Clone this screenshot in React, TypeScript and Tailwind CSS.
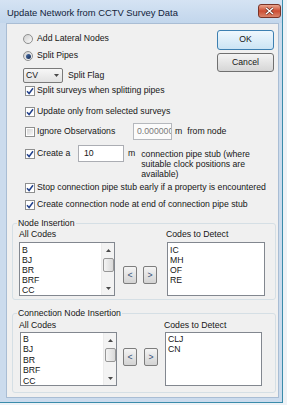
import React from "react";

const Check = () => (
  <svg width="8" height="8" viewBox="0 0 8 8">
    <path d="M1 4.3 L3.1 6.5 L7 1.3" fill="none" stroke="#22418c" strokeWidth="1.5" />
  </svg>
);

function CheckBox({ checked }: { checked?: boolean }) {
  return (
    <div className="w-[10px] h-[10px] shrink-0 border border-[#8e8f8f] bg-white flex items-center justify-center">
      {checked ? (
        <Check />
      ) : (
        <div className="w-[6px] h-[6px] bg-linear-to-br from-[#d6d6d6] to-[#f6f6f6]" />
      )}
    </div>
  );
}

function Radio({ checked }: { checked?: boolean }) {
  return (
    <div className="w-[10px] h-[10px] shrink-0 rounded-full border border-[#8e8f8f] bg-linear-to-br from-[#cfcfcf] to-[#fbfbfb] flex items-center justify-center">
      {checked && <div className="w-[5px] h-[5px] rounded-full bg-linear-to-br from-[#4a6fa8] to-[#142a52]" />}
    </div>
  );
}

function Tri({ down }: { down?: boolean }) {
  return (
    <svg width="5" height="3" viewBox="0 0 5 3">
      <path d={down ? "M0 0 L5 0 L2.5 3 Z" : "M0 3 L5 3 L2.5 0 Z"} fill="#4a4a4a" />
    </svg>
  );
}

function ListBox({ items, scroll, cls, inner }: { items: string[]; scroll?: boolean; cls: string; inner: string }) {
  return (
    <div className={`${cls} h-[54px] shrink-0 border border-[#82878f] bg-white flex overflow-hidden`}>
      <div className={`flex-1 pl-[2px] overflow-hidden ${inner}`}>
        {items.map((it) => (
          <div key={it}>{it}</div>
        ))}
      </div>
      {scroll && (
        <div className="w-[13px] h-full bg-[#f3f3f3] border-l border-[#ececec] flex flex-col items-center">
          <div className="h-[14px] w-full flex items-center justify-center">
            <Tri />
          </div>
          <div className="w-[11px] h-[14px] mt-[1px] rounded-[2px] border border-[#979797] bg-linear-to-r from-[#f4f4f4] to-[#d9d9d9]" />
          <div className="flex-1" />
          <div className="h-[14px] w-full flex items-center justify-center">
            <Tri down />
          </div>
        </div>
      )}
    </div>
  );
}

function SmallBtn({ label }: { label: string }) {
  return (
    <div className="w-[14px] h-[18px] shrink-0 border border-[#7d7d7d] rounded-[2px] bg-linear-to-b from-[#f4f4f4] to-[#d3d3d3] flex items-center justify-center text-[#304f78] leading-none">
      {label}
    </div>
  );
}

export default function App() {
  const all = ["B", "BJ", "BR", "BRF", "CC"];
  return (
    <div className="w-[287px] h-[405px] bg-[#eef2f6] font-['Liberation_Sans',Arial,sans-serif] text-[8.7px] text-[#161616] overflow-hidden">
      <div className="w-[283px] h-[403px] border-r border-b border-[#3a8cab] bg-[#cbdbed] flex flex-col">
        {/* Title bar */}
        <div className="h-[23px] shrink-0 flex items-start bg-linear-to-b from-[#d5e3f3] to-[#c2d6ec]">
          <div className="ml-[7px] mt-[7px] text-[9.4px] leading-[12px] text-[#11223a]">
            Update Network from CCTV Survey Data
          </div>
          <div className="ml-auto mr-[1px] mt-[4px] w-[23px] h-[14px] rounded-[3px] border border-[#7a3327] bg-linear-to-b from-[#e8a58f] via-[#cc4c33] to-[#d9846b] flex items-center justify-center">
            <svg width="9" height="8" viewBox="0 0 9 8">
              <path d="M1 1 L8 7 M8 1 L1 7" stroke="#5a2318" strokeWidth="2.6" />
              <path d="M1 1 L8 7 M8 1 L1 7" stroke="#ffffff" strokeWidth="1.5" />
            </svg>
          </div>
        </div>

        {/* Client area */}
        <div className="ml-[6px] w-[273px] h-[375px] shrink-0 border border-[#a9bdd4] bg-[#f0f0f0] flex flex-col">
          {/* Top row with buttons */}
          <div className="flex h-[59px] shrink-0">
            <div className="flex-1 pl-[16px] flex flex-col">
              <div className="mt-[8px] h-[14px] flex items-center gap-[4px]">
                <Radio />
                <span>Add Lateral Nodes</span>
              </div>
              <div className="mt-[3px] h-[14px] flex items-center gap-[4px]">
                <Radio checked />
                <span>Split Pipes</span>
              </div>
              <div className="mt-[5px] h-[15px] flex items-center gap-[5px]">
                <div className="w-[40px] h-[15px] border border-[#7a7a7a] rounded-[2px] bg-linear-to-b from-[#f7f7f7] to-[#e2e2e2] flex items-center pl-[2px] pr-[3px]">
                  <span className="flex-1">CV</span>
                  <Tri down />
                </div>
                <span>Split Flag</span>
              </div>
            </div>
            <div className="w-[57px] mr-[4px] mt-[6px] flex flex-col">
              <div className="h-[20px] border border-[#3c7fb1] rounded-[3px] bg-linear-to-b from-[#eef7fd] to-[#cbe4f4] flex items-center justify-center">
                OK
              </div>
              <div className="mt-[3px] h-[19px] border border-[#707070] rounded-[3px] bg-linear-to-b from-[#f4f4f4] to-[#d6d6d6] flex items-center justify-center">
                Cancel
              </div>
            </div>
          </div>

          {/* Option rows */}
          <div className="pl-[18px] flex flex-col">
            <div className="mt-[2px] h-[12px] flex items-center gap-[2px]">
              <CheckBox checked />
              <span>Split surveys when splitting pipes</span>
            </div>
            <div className="mt-[9px] h-[12px] flex items-center gap-[2px]">
              <CheckBox checked />
              <span>Update only from selected surveys</span>
            </div>
            <div className="mt-[5px] h-[17px] flex items-center">
              <CheckBox />
              <span className="ml-[2px] w-[96px]">Ignore Observations</span>
              <div className="w-[39px] h-[17px] border border-[#b5b8bd] bg-[#fbfbfb] flex items-center pl-[3px] overflow-hidden whitespace-nowrap text-[#7a7a7a]">
                0.000000
              </div>
              <span className="ml-[3px]">m</span>
              <span className="ml-[5px]">from node</span>
            </div>
            <div className="mt-[5px] h-[34px] flex items-start">
              <div className="h-[17px] flex items-center">
                <CheckBox checked />
                <span className="ml-[2px] w-[41px]">Create a</span>
              </div>
              <div className="w-[46px] h-[17px] border border-[#abadb3] bg-white flex items-center pl-[5px]">10</div>
              <div className="ml-[4px] h-[17px] flex items-center">m</div>
              <div className="ml-[6px] mt-[4px] leading-[10px]">
                <div>connection pipe stub (where</div>
                <div>suitable clock positions are</div>
                <div>available)</div>
              </div>
            </div>
            <div className="mt-[3px] h-[12px] flex items-center gap-[2px]">
              <CheckBox checked />
              <span>Stop connection pipe stub early if a property is encountered</span>
            </div>
            <div className="mt-[5px] h-[12px] flex items-center gap-[2px]">
              <CheckBox checked />
              <span>Create connection node at end of connection pipe stub</span>
            </div>
          </div>

          {/* Node Insertion group */}
          <fieldset className="mt-[7px] ml-[5px] w-[264px] border border-[#d5dfe5] rounded-[3px] pb-[3px]">
            <legend className="ml-[4px] px-[1px] leading-[10px]">Node Insertion</legend>
            <div className="mt-[1px] h-[10px] pl-[6px] flex items-center leading-[10px]">
              <span className="w-[147px]">All Codes</span>
              <span>Codes to Detect</span>
            </div>
            <div className="mt-[3px] pl-[6px] flex items-start">
              <ListBox items={all} scroll cls="w-[96px]" inner="pt-[2px] leading-[10px]" />
              <div className="ml-[8px] mt-[24px]">
                <SmallBtn label="<" />
              </div>
              <div className="ml-[6px] mt-[24px]">
                <SmallBtn label=">" />
              </div>
              <div className="ml-[10px]">
                <ListBox items={["IC", "MH", "OF", "RE"]} cls="w-[98px]" inner="pt-[2px] leading-[10px]" />
              </div>
            </div>
          </fieldset>

          {/* Connection Node Insertion group */}
          <fieldset className="mt-[8px] ml-[5px] w-[264px] border border-[#d5dfe5] rounded-[3px] pb-[6px]">
            <legend className="ml-[4px] px-[1px] leading-[10px]">Connection Node Insertion</legend>
            <div className="mt-[2px] h-[10px] pl-[6px] flex items-center leading-[10px]">
              <span className="w-[145px]">All Codes</span>
              <span>Codes to Detect</span>
            </div>
            <div className="mt-[2px] pl-[7px] flex items-start">
              <ListBox items={all} scroll cls="w-[97px]" inner="pt-[1px] leading-[10.4px]" />
              <div className="ml-[6px] mt-[16px]">
                <SmallBtn label="<" />
              </div>
              <div className="ml-[7px] mt-[16px]">
                <SmallBtn label=">" />
              </div>
              <div className="ml-[7px]">
                <ListBox items={["CLJ", "CN"]} cls="w-[97px]" inner="pt-[1px] leading-[10.4px]" />
              </div>
            </div>
          </fieldset>
        </div>
      </div>
    </div>
  );
}
